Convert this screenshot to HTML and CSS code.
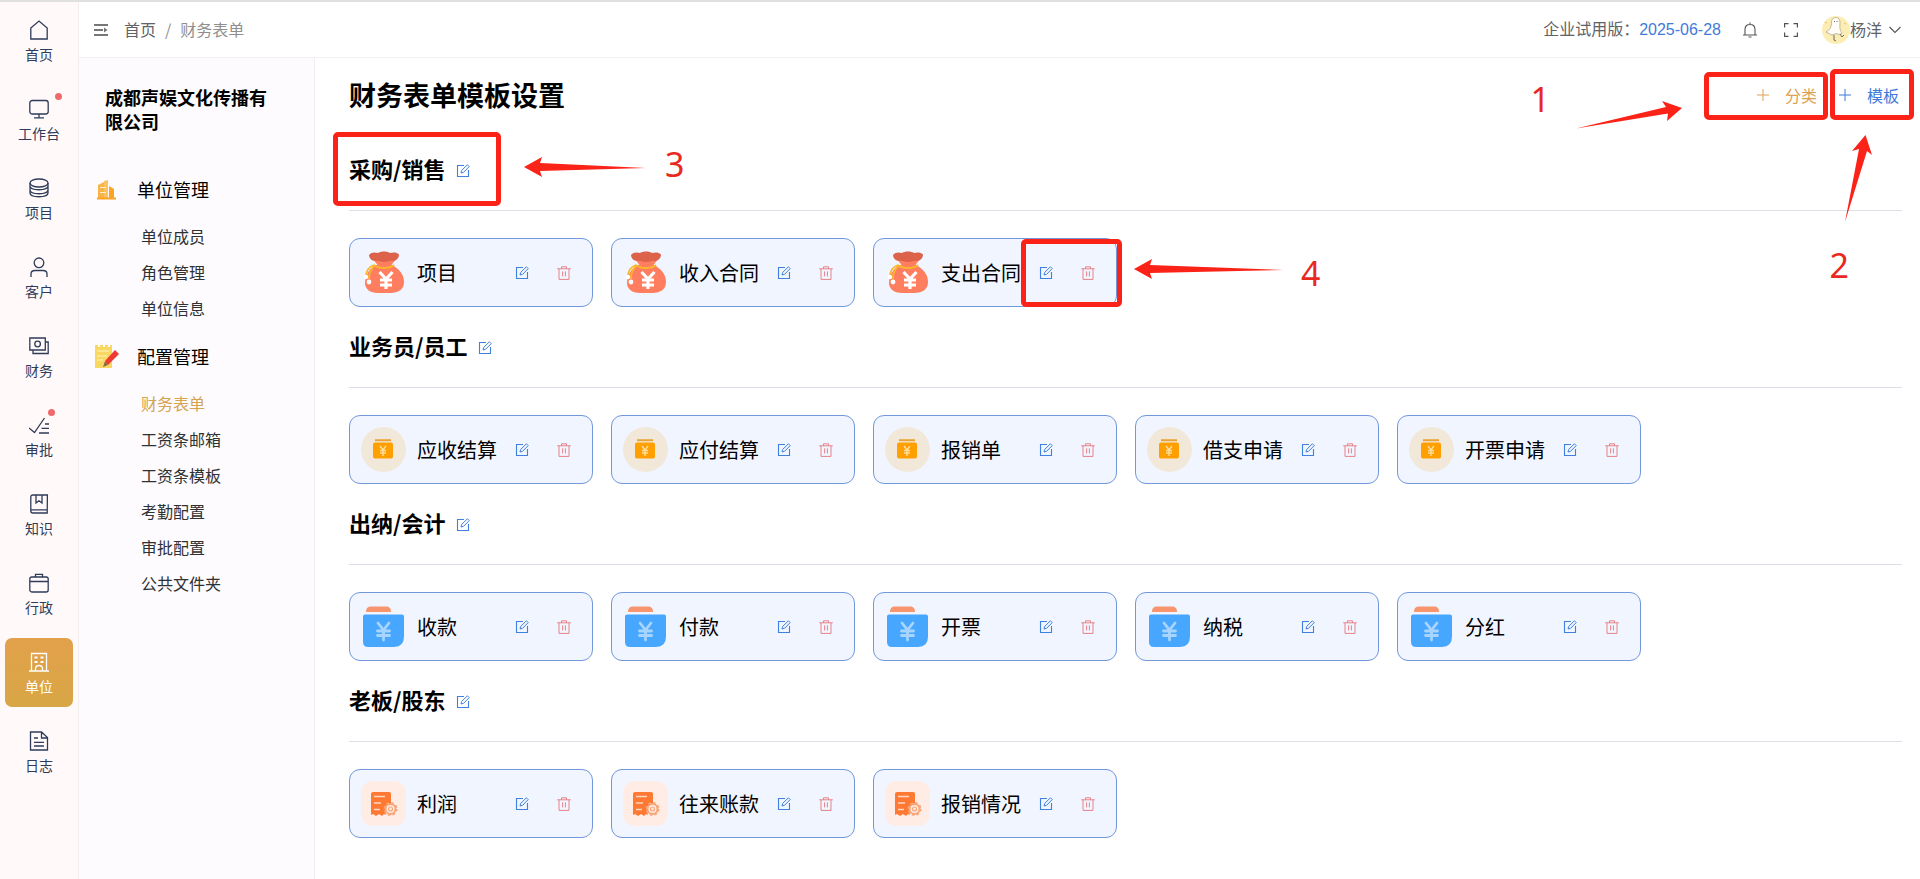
FILE: index.html
```html
<!DOCTYPE html>
<html lang="zh-CN">
<head>
<meta charset="utf-8">
<title>财务表单</title>
<link rel="stylesheet" href="styles.css">
</head>
<body>
<svg class="defs" aria-hidden="true">
  <symbol id="edit" viewBox="0 0 14 14"><path d="M8 1.5H1.5v11h11V6" fill="none" stroke="currentColor" stroke-width="1.1"/><path d="M5 9l.7-2.6L11.4.8l1.8 1.8-5.6 5.7z" fill="none" stroke="currentColor"/></symbol>
  <symbol id="trash" viewBox="0 0 14 14"><path d="M.2 2.8h13.6M4.5 2.8V.8h5v2M2 2.8v10.6h10V2.8M5.6 5.4v5M8.4 5.4v5" fill="none" stroke="currentColor"/></symbol>
  <symbol id="plus" viewBox="0 0 14 14"><path d="M7 1v12M1 7h12" fill="none" stroke="currentColor"/></symbol>
  <symbol id="bag" viewBox="0 0 45 45">
    <path d="M14 15C8 19 4 26 4 33c0 6 5 10 13 10h12c9 0 14-4 14-11 0-8-5-13-12-17z" fill="#ff7e5f"/>
    <path d="M12 9l6 8h11l6-8z" fill="#ff7e5f"/>
    <path d="M8 5c2-3 6-3 9-2 3-2 9-2 12 0 3-1 7-1 9 1.500 0 3-2 6-6 6.500-3-1-5 1-9 1s-5-2-9-1C11 11 8 8 8 5z" fill="#dc6349"/>
    <path d="M13 15c5 4 15 4 20 0M13 15c-6 2-8 7-8 12M13 16c-3 4-5 6-5 13" fill="none" stroke="#fbb72c" stroke-width="1.800"/>
    <circle cx="5" cy="27" r="2.200" fill="#fff"/><circle cx="8" cy="32" r="2.400" fill="#fff"/>
    <path d="M18.500 22l6.500 7 6.500-7M25 28v11M19 30h12M19 35h12" fill="none" stroke="#fff" stroke-width="3.200"/>
  </symbol>
  <symbol id="purse" viewBox="0 0 45 45">
    <circle cx="22.5" cy="22.500" r="22.500" fill="#f2e8da"/>
    <path d="M14 13.200h16" stroke="#e8a535" stroke-width="2"/><rect x="12" y="15.500" width="20" height="16" rx="2" fill="#ff9f00"/>
    <path d="M19 19l3 4 3-4M22 23v6M19 23.500h6M19 26h6" fill="none" stroke="#ffe0a5" stroke-width="1.300"/>
  </symbol>
  <symbol id="wallet" viewBox="0 0 45 45">
    <path d="M5 8c0-4 2-5.500 5-5.500h15c4 0 5 2.500 5 5.500z" fill="#f7956e"/>
    <path d="M4 10.500h37q2 0 2 2v20q0 10.500-10 10.500H7q-5 0-5-5V12.500q0-2 2-2z" fill="#47a7ff"/>
    <path d="M17 19l5.500 7 5.500-7M22.500 26v10M16.500 27h12M16.500 31.500h12" fill="none" stroke="#a7d5ff" stroke-width="2.800" stroke-linecap="round"/>
  </symbol>
  <symbol id="report" viewBox="0 0 45 45">
    <rect width="45" height="45" rx="12" fill="#ffece5"/>
    <path d="M10 13q0-2 2-2h16q2 0 2 2v9q-6 2-6 8l1 4-2-1-2 2-3-2-3 2-3-2-2 1z" fill="#ff7933"/>
    <path d="M13 15.500h11M13 22h7M13 28.500h6" stroke="#ffd6c2" stroke-width="1.500"/>
    <circle cx="29.500" cy="28" r="5" fill="#ffece5" stroke="#f9a678" stroke-width="2"/><circle cx="29.500" cy="28" r="6" fill="none" stroke="#f9a678" stroke-width="2" stroke-dasharray="2.400 2.312"/><circle cx="29.500" cy="28" r="2" fill="none" stroke="#f9a678" stroke-width="1.200"/>
  </symbol>
</svg>

<div class="app">
  <nav class="rail">
    <a class="rail-item" href="#"><svg viewBox="0 0 20 20"><path d="M1.800 19V8L10 1l8.200 7v11z"/></svg>首页</a>
    <a class="rail-item" href="#"><svg viewBox="0 0 20 20"><rect x=".8" y="1.500" width="18.400" height="13.500" rx="2.500"/><path d="M10 15v3.500M5 18.800h10"/></svg>工作台<i class="dot"></i></a>
    <a class="rail-item" href="#"><svg viewBox="0 0 20 20"><ellipse cx="10" cy="5" rx="9" ry="4"/><path d="M1 5v10c0 5 18 5 18 0V5M1 8c0 5 18 5 18 0M1 12c0 5 18 5 18 0"/></svg>项目</a>
    <a class="rail-item" href="#"><svg viewBox="0 0 20 20"><circle cx="10" cy="5.800" r="4.800"/><path d="M2 20v-3q0-3.500 4-3.500h8q4 0 4 3.500v3"/></svg>客户</a>
    <a class="rail-item" href="#"><svg viewBox="0 0 20 20"><path d="M.8 2h15.500v12H.8zM16.500 6h2.700v11.500H4V14"/><circle cx="8.600" cy="8" r="2.800"/></svg>财务</a>
    <a class="rail-item" href="#"><svg viewBox="0 0 20 20"><path d="M0 13l5.500 4.500L15.500 3M16 9h4M12.500 13.300H20M10 18h10"/></svg>审批<i class="dot dot-near"></i></a>
    <a class="rail-item" href="#"><svg viewBox="0 0 20 20"><path d="M18.200 19H4q-2.200 0-2.200-2V3q0-2 2.200-2h14.400zM2 15.800h16M7 1v8l3-2.300L13 9V1"/></svg>知识</a>
    <a class="rail-item" href="#"><svg viewBox="0 0 20 20"><rect x=".8" y="4" width="18.400" height="15" rx="2"/><path d="M6.500 4V1.300h7V4M1 8.500h18"/></svg>行政</a>
    <a class="rail-item active" href="#"><svg viewBox="0 0 20 20"><path d="M0 19h20M2.500 19V1.500h15V19M6.500 19v-2q0-3.500 3.500-3.500t3.500 3.500v2"/><path d="M5.500 5.500h3M11.500 5.500h3M5.500 10h3M11.500 10h3" stroke-width="2.200"/></svg>单位</a>
    <a class="rail-item" href="#"><svg viewBox="0 0 20 20"><path d="M1.500 1h11l6 5.500V19h-17zM12.500 1v6h6M5 7h4M5 11.300h10M5 15h10"/></svg>日志</a>
  </nav>

  <div class="body">
    <header class="topbar">
      <button class="icon-btn" aria-label="折叠菜单"><svg width="14" height="14" viewBox="0 0 14 14"><path d="M0 2h14M0 7h9M0 12h14" fill="none" stroke="#777" stroke-width="2"/><path d="M10 4.500L13.500 7 10 9.500z" fill="#777"/></svg></button>
      <div class="crumbs"><a href="#">首页</a><span>/</span><span>财务表单</span></div>
      <div class="trial">企业试用版：<span class="date">2025-06-28</span></div>
      <button class="icon-btn bell" aria-label="通知"><svg width="14" height="16" viewBox="0 0 14 16"><path d="M0 13h14M2 13V7.500Q2 2.500 7 2.500t5 5V13M7 2.500V.5M5.500 15h3" fill="none" stroke="#555" stroke-width="1.100"/></svg></button>
      <button class="icon-btn full" aria-label="全屏"><svg width="14" height="14" viewBox="0 0 14 14"><path d="M.6 4.500V.6h3.900M9.500.6h3.900v3.900M13.400 9.500v3.900H9.500M4.500 13.400H.6V9.500" fill="none" stroke="#555" stroke-width="1.200"/></svg></button>
      <button class="user">
        <svg width="28" height="28" viewBox="0 0 28 28"><circle cx="14" cy="14" r="14" fill="#fcedb4"/><path d="M9.500 6c0-6 8.500-6 8.500 0 0 4-1 7 2 11l-3 1.500-3-1-4 1.500-6-3c4-2 5.500-5 5.500-10z" fill="#fffdf6" stroke="#a8a18d" stroke-width=".7"/><path d="M12 19v5l2 1M18 18l2 3 2-2M12.500 5v1M15 5v1" fill="none" stroke="#6f695d" stroke-width="1"/><path d="M3 6l2 1M22 7l2 1" stroke="#f4b66b"/></svg>
        <span class="user-name">杨洋</span>
        <svg class="caret" width="12" height="8" viewBox="0 0 12 8"><path d="M.5 1L6 6.500 11.500 1" fill="none" stroke="#555" stroke-width="1.100"/></svg>
      </button>
    </header>

    <div class="content">
      <aside class="side">
        <div class="company">成都声娱文化传播有限公司</div>
        <h3 class="group"><svg viewBox="0 0 26 26"><path d="M4 9l8-4v18H4z" fill="#f9b347"/><path d="M10 5l4-1v19h-4z" fill="#fbc25f"/><path d="M15 10l5 3v10h-5z" fill="#fba325"/><path d="M3 22.500h19" stroke="#fba325" stroke-width="2"/><path d="M6 11.500h6M6 16.500h6" stroke="#fff0d0" stroke-width="1.200"/></svg>单位管理</h3>
        <ul class="menu">
          <li><a href="#">单位成员</a></li><li><a href="#">角色管理</a></li><li><a href="#">单位信息</a></li>
        </ul>
        <h3 class="group"><svg viewBox="0 0 26 26"><path d="M1 2h3v2h2V2h3v2h2V2h3v2h2V2h2v23H1z" fill="#f9d862"/><path d="M3 8h12M3 13h10M3 17h6" stroke="#fff3c0" stroke-width="1.200"/><path d="M11 18l10-11 4 4-11 11z" fill="#ee3a32"/><path d="M11 18l3 4-5 2z" fill="#8b6b50"/></svg>配置管理</h3>
        <ul class="menu">
          <li><a class="current" href="#">财务表单</a></li><li><a href="#">工资条邮箱</a></li><li><a href="#">工资条模板</a></li><li><a href="#">考勤配置</a></li><li><a href="#">审批配置</a></li><li><a href="#">公共文件夹</a></li>
        </ul>
      </aside>

      <main class="main">
        <div class="title-row">
          <h1>财务表单模板设置</h1>
          <div class="actions">
            <button class="add add-type"><svg><use href="#plus"/></svg>分类</button>
            <button class="add add-form"><svg><use href="#plus"/></svg>模板</button>
          </div>
        </div>
        <div id="sections"></div>

        <div class="notes" aria-hidden="true">
          <i class="frame frame-1"></i><i class="frame frame-2"></i><i class="frame frame-3"></i><i class="frame frame-4"></i>
          <svg class="arrow arrow-1" width="106" height="30"><path d="M106 8L86 1l4 6L0 28.500l92-15-1 7.500z"/></svg>
          <svg class="arrow arrow-2" width="28" height="88"><path d="M20.500 0L7 16l7-2L0 87l22-71 5 4z"/></svg>
          <svg class="arrow arrow-3" width="122" height="20"><path d="M0 10L18 0l-2 6 106 5-106 3 2 6z"/></svg>
          <svg class="arrow arrow-4" width="150" height="20"><path d="M0 10L18 0l-2 6 134 5-134 3 2 6z"/></svg>
          <b class="num num-1">1</b><b class="num num-2">2</b><b class="num num-3">3</b><b class="num num-4">4</b>
        </div>
      </main>
    </div>
  </div>
</div>
<script src="app.js"></script>
</body>
</html>
```
FILE: app.js
```js
const sections = [
  { title: '采购/销售', icon: 'bag', items: ['项目', '收入合同', '支出合同'] },
  { title: '业务员/员工', icon: 'purse', items: ['应收结算', '应付结算', '报销单', '借支申请', '开票申请'] },
  { title: '出纳/会计', icon: 'wallet', items: ['收款', '付款', '开票', '纳税', '分红'] },
  { title: '老板/股东', icon: 'report', items: ['利润', '往来账款', '报销情况'] }
];
const btn = (icon, label) =>
  `<button class="tool tool-${icon}" aria-label="${label}"><svg><use href="#${icon}"/></svg></button>`;
document.getElementById('sections').innerHTML = sections.map(s => `
  <section class="section">
    <div class="section-head"><h2>${s.title}</h2>${btn('edit', '编辑')}</div>
    <div class="cards">${s.items.map(n => `
      <div class="card"><svg class="card-icon"><use href="#${s.icon}"/></svg><span class="card-name">${n}</span>${btn('edit', '编辑')}${btn('trash', '删除')}</div>`).join('')}
    </div>
  </section>`).join('');
```
FILE: styles.css
```css
* { box-sizing: border-box; }
body { margin: 0; font-family: "Noto Sans CJK SC", sans-serif; font-size: 16px; color: #000; background: #fff; }
h1, h2, h3, ul { margin: 0; padding: 0; }
a { color: inherit; text-decoration: none; }
button { font: inherit; color: inherit; border: 0; padding: 0; background: none; cursor: pointer; display: flex; align-items: center; }
.defs { position: absolute; width: 0; height: 0; }
.app { display: flex; min-height: 100vh; border-top: 2px solid #e0e0e0; }

.rail { width: 79px; flex: none; display: flex; flex-direction: column; align-items: center; gap: 10px; padding: 4px 5px 0; background: #fffaf9; border-right: 1px solid #f2eeee; }
.rail-item { position: relative; width: 68px; height: 69px; display: flex; flex-direction: column; align-items: center; gap: 4px; padding-top: 14px; border-radius: 7px; font-size: 14px; line-height: 20px; color: #2f3b59; }
.rail-item svg { width: 20px; height: 20px; flex: none; fill: none; stroke: currentColor; stroke-width: 1.3; }
.rail-item.active { color: #fff; background: linear-gradient(#e2a14b, #d8a645); }
.dot { position: absolute; left: 50px; top: 8px; width: 7px; height: 7px; border-radius: 50%; background: #ef6b6b; }
.dot-near { left: 43px; }

.body { flex: 1; min-width: 0; display: flex; flex-direction: column; }
.topbar { height: 56px; display: flex; align-items: center; padding: 0 19px 0 15px; border-bottom: 1px solid #f1f1f1; color: #606266; line-height: 24px; }
.crumbs, .trial, .user-name { padding-bottom: 2px; }
.crumbs { display: flex; gap: 9px; margin: 0 auto 0 16px; color: #8f8f8f; }
.crumbs a { color: #606266; }
.date { font-family: "Liberation Sans", sans-serif; color: #3f7bd8; }
.bell { margin-left: 22px; }
.full { margin-left: 27px; }
.user { margin-left: 24px; }
.caret { margin-left: 7px; }

.content { flex: 1; display: flex; }
.side { width: 236px; flex: none; padding: 27px 16px 0 15px; background: #fdfbfd; border-right: 1px solid #f1eff1; }
.company { padding: 0 24px 0 11px; margin-bottom: 40px; font-size: 18px; font-weight: 700; line-height: 24px; }
.group { display: flex; align-items: center; gap: 17px; height: 32px; font-size: 18px; font-weight: 400; }
.group svg { width: 26px; height: 26px; }
.menu { list-style: none; padding: 13px 0 14px 47px; font-size: 16px; line-height: 36px; color: #303133; }
.current { color: #d5a24f; }

.main { flex: 1; min-width: 0; position: relative; padding: 19px 18px 40px 34px; }
.title-row { display: flex; justify-content: space-between; align-items: center; height: 36px; }
h1 { font-size: 27px; line-height: 36px; }
.actions { display: flex; gap: 21px; padding-right: 3px; }
.add { gap: 15px; line-height: 24px; }
.add svg { width: 14px; height: 14px; }
.add-type { color: #e0a050; }
.add-form { color: #3f7bd8; }
#sections { padding-top: 42px; display: flex; flex-direction: column; gap: 25px; }
.section-head { display: flex; align-items: center; gap: 10px; padding-bottom: 29px; margin-bottom: 27px; border-bottom: 1px solid #dcdfe6; }
.section-head .tool { margin-top: 6px; }
h2 { font-size: 22px; line-height: 26px; }
.cards { display: flex; flex-wrap: wrap; gap: 18px; }
.card { width: 244px; height: 69px; display: flex; align-items: center; padding: 0 21px 0 11px; border: 1px solid #7298dc; border-radius: 11px; background: #f0f5ff; }
.card-icon { width: 45px; height: 45px; }
.card-name { margin: 0 auto 0 11px; font-size: 20px; line-height: 30px; }
.tool svg { width: 14px; height: 14px; }
.tool-edit { color: #4080df; }
.tool-trash { color: #e78287; margin-left: 28px; }

.frame, .arrow, .num { position: absolute; pointer-events: none; }
.frame { border: 5px solid #fb2318; border-radius: 5px; }
.frame-1 { right: 92px; top: 14px; width: 124px; height: 48px; }
.frame-2 { right: 6px; top: 11px; width: 84px; height: 51px; }
.frame-3 { left: 18px; top: 74px; width: 168px; height: 74px; }
.frame-4 { left: 706px; top: 181px; width: 101px; height: 68px; }
.arrow { fill: #fb2318; }
.arrow-1 { right: 238px; top: 42px; }
.arrow-2 { right: 47px; top: 77px; }
.arrow-3 { left: 209px; top: 99px; }
.arrow-4 { left: 819px; top: 201px; }
.num { font: 400 34px/40px "Noto Sans", sans-serif; color: #e8291f; }
.num-1 { right: 370px; top: 21px; }
.num-2 { right: 71px; top: 187px; }
.num-3 { left: 350px; top: 86px; }
.num-4 { left: 986px; top: 195px; }
```
